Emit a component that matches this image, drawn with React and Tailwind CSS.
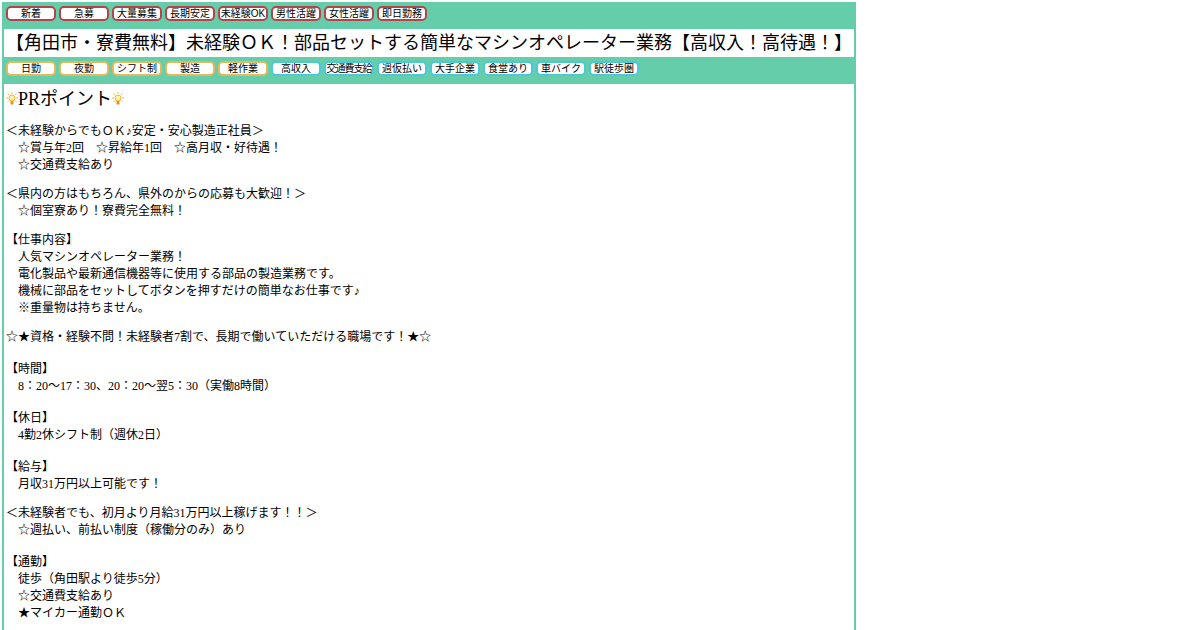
const redTags = ['新着', '急募', '大量募集', '長期安定', '未経験OK', '男性活躍', '女性活躍', '即日勤務']
const orangeTags = ['日勤', '夜勤', 'シフト制', '製造', '軽作業']
const blueTags = ['高収入', '交通費支給', '週仮払い', '大手企業', '食堂あり', '車バイク', '駅徒歩圏']

const Tag = ({ label, border }) => (
  <span
    className={`flex h-[15px] w-[50px] items-center justify-center rounded-[5px] border-2 bg-white text-[10px] leading-none whitespace-nowrap text-black [font-family:'Liberation_Sans','Noto_Sans_CJK_JP',sans-serif] ${label === '交通費支給' ? 'tracking-[-1px]' : ''} ${border}`}
  >
    {label}
  </span>
)

const Bulb = () => (
  <svg width="12" height="14" viewBox="0 0 12 14" className="shrink-0">
    <path d="M6 0v2M1.500 1.500L3 3M10.500 1.500L9 3M0 6h2M10 6h2M1.500 10L3 8.500M10.500 10L9 8.500" stroke="#f0b850" strokeWidth="1" />
    <circle cx="6" cy="6" r="3" fill="#fdf0b0" stroke="#f0b840" />
    <rect x="4.500" y="9" width="3" height="3.500" fill="#e8941e" />
  </svg>
)

const Block = ({ head, lines, className = '' }) => (
  <div className={className}>
    <p>{head}</p>
    {lines.map((line) => (
      <p key={line} className="pl-3 whitespace-pre">
        {line}
      </p>
    ))}
  </div>
)

const App = () => {
  return (
    <div className="h-[630px] overflow-hidden bg-white pt-0.5 pl-0.5 [font-family:'Liberation_Serif','Noto_Sans_CJK_JP',serif]">
      <div className="h-[640px] w-[854px] border-x-2 border-[#66cdaa]">
        <div className="flex h-[27px] gap-[3px] bg-[#66cdaa] pt-1 pl-0.5">
          {redTags.map((tag) => (
            <Tag key={tag} label={tag} border="border-[#b0464c]" />
          ))}
        </div>

        <h1 className="h-7 pl-0.5 text-lg leading-7 font-normal whitespace-nowrap text-black [font-family:'Liberation_Sans','Noto_Sans_CJK_JP',sans-serif]">
          【角田市・寮費無料】未経験ＯＫ！部品セットする簡単なマシンオペレーター業務【高収入！高待遇！】
        </h1>

        <div className="flex h-[27px] gap-[3px] bg-[#66cdaa] pt-1 pl-0.5">
          {orangeTags.map((tag) => (
            <Tag key={tag} label={tag} border="border-[#e4b85c]" />
          ))}
          {blueTags.map((tag) => (
            <Tag key={tag} label={tag} border="border-[#4cc8dc]" />
          ))}
        </div>

        <div className="pl-0.5 text-xs leading-[17px] text-black">
          <h2 className="flex h-7 items-center pt-0.5 text-lg leading-7 font-normal">
            <Bulb />
            PRポイント
            <Bulb />
          </h2>
          <Block
            className="mt-[11px]"
            head="＜未経験からでもＯＫ♪安定・安心製造正社員＞"
            lines={['☆賞与年2回　☆昇給年1回　☆高月収・好待遇！', '☆交通費支給あり']}
          />
          <Block className="mt-3" head="＜県内の方はもちろん、県外のからの応募も大歓迎！＞" lines={['☆個室寮あり！寮費完全無料！']} />
          <Block
            className="mt-3"
            head="【仕事内容】"
            lines={[
              '人気マシンオペレーター業務！',
              '電化製品や最新通信機器等に使用する部品の製造業務です。',
              '機械に部品をセットしてボタンを押すだけの簡単なお仕事です♪',
              '※重量物は持ちません。',
            ]}
          />
          <p className="mt-3">☆★資格・経験不問！未経験者7割で、長期で働いていただける職場です！★☆</p>
          <Block className="mt-[15px]" head="【時間】" lines={['8：20～17：30、20：20～翌5：30（実働8時間）']} />
          <Block className="mt-[15px]" head="【休日】" lines={['4勤2休シフト制（週休2日）']} />
          <Block className="mt-[15px]" head="【給与】" lines={['月収31万円以上可能です！']} />
          <Block className="mt-3" head="＜未経験者でも、初月より月給31万円以上稼げます！！＞" lines={['☆週払い、前払い制度（稼働分のみ）あり']} />
          <Block className="mt-[15px]" head="【通勤】" lines={['徒歩（角田駅より徒歩5分）', '☆交通費支給あり', '★マイカー通勤ＯＫ']} />
        </div>
      </div>
    </div>
  )
}

export default App
